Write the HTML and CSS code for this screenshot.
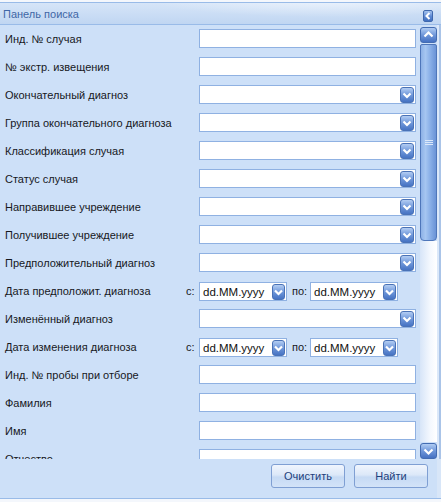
FILE: index.html
```html
<!DOCTYPE html>
<html lang="ru">
<head>
<meta charset="utf-8">
<title>Панель поиска</title>
<link rel="stylesheet" href="styles.css">
</head>
<body>
<div class="panel">
  <div class="header">
    <span class="title">Панель поиска</span>
    <span class="collapse"><svg width="6" height="8" viewBox="0 0 6 8"><polyline points="4.5,1 1.5,4 4.5,7" fill="none" stroke="#fff" stroke-width="2"/></svg></span>
  </div>
  <div class="body">
    <div class="form">
      <div class="row"><span class="lbl">Инд. № случая</span><div class="field"></div></div>
      <div class="row"><span class="lbl">№ экстр. извещения</span><div class="field"></div></div>
      <div class="row"><span class="lbl">Окончательный диагноз</span><div class="field"><span class="trig"><svg width="14" height="16" viewBox="0 0 14 16"><polyline points="3.5,6.5 7,10 10.5,6.5" fill="none" stroke="#fff" stroke-width="2.2"/></svg></span></div></div>
      <div class="row"><span class="lbl">Группа окончательного диагноза</span><div class="field"><span class="trig"><svg width="14" height="16" viewBox="0 0 14 16"><polyline points="3.5,6.5 7,10 10.5,6.5" fill="none" stroke="#fff" stroke-width="2.2"/></svg></span></div></div>
      <div class="row"><span class="lbl">Классификация случая</span><div class="field"><span class="trig"><svg width="14" height="16" viewBox="0 0 14 16"><polyline points="3.5,6.5 7,10 10.5,6.5" fill="none" stroke="#fff" stroke-width="2.2"/></svg></span></div></div>
      <div class="row"><span class="lbl">Статус случая</span><div class="field"><span class="trig"><svg width="14" height="16" viewBox="0 0 14 16"><polyline points="3.5,6.5 7,10 10.5,6.5" fill="none" stroke="#fff" stroke-width="2.2"/></svg></span></div></div>
      <div class="row"><span class="lbl">Направившее учреждение</span><div class="field"><span class="trig"><svg width="14" height="16" viewBox="0 0 14 16"><polyline points="3.5,6.5 7,10 10.5,6.5" fill="none" stroke="#fff" stroke-width="2.2"/></svg></span></div></div>
      <div class="row"><span class="lbl">Получившее учреждение</span><div class="field"><span class="trig"><svg width="14" height="16" viewBox="0 0 14 16"><polyline points="3.5,6.5 7,10 10.5,6.5" fill="none" stroke="#fff" stroke-width="2.2"/></svg></span></div></div>
      <div class="row"><span class="lbl">Предположительный диагноз</span><div class="field"><span class="trig"><svg width="14" height="16" viewBox="0 0 14 16"><polyline points="3.5,6.5 7,10 10.5,6.5" fill="none" stroke="#fff" stroke-width="2.2"/></svg></span></div></div>
      <div class="row row-date"><span class="lbl lbl-date">Дата предположит. диагноза</span><span class="sep">с:</span><div class="field date"><span class="val">dd.MM.yyyy</span><span class="trig"><svg width="13" height="16" viewBox="0 0 13 16"><polyline points="3,6.5 6.5,10 10,6.5" fill="none" stroke="#fff" stroke-width="2.2"/></svg></span></div><span class="sep po">по:</span><div class="field date date2"><span class="val">dd.MM.yyyy</span><span class="trig"><svg width="13" height="16" viewBox="0 0 13 16"><polyline points="3,6.5 6.5,10 10,6.5" fill="none" stroke="#fff" stroke-width="2.2"/></svg></span></div></div>
      <div class="row"><span class="lbl">Изменённый диагноз</span><div class="field"><span class="trig"><svg width="14" height="16" viewBox="0 0 14 16"><polyline points="3.5,6.5 7,10 10.5,6.5" fill="none" stroke="#fff" stroke-width="2.2"/></svg></span></div></div>
      <div class="row row-date"><span class="lbl lbl-date">Дата изменения диагноза</span><span class="sep">с:</span><div class="field date"><span class="val">dd.MM.yyyy</span><span class="trig"><svg width="13" height="16" viewBox="0 0 13 16"><polyline points="3,6.5 6.5,10 10,6.5" fill="none" stroke="#fff" stroke-width="2.2"/></svg></span></div><span class="sep po">по:</span><div class="field date date2"><span class="val">dd.MM.yyyy</span><span class="trig"><svg width="13" height="16" viewBox="0 0 13 16"><polyline points="3,6.5 6.5,10 10,6.5" fill="none" stroke="#fff" stroke-width="2.2"/></svg></span></div></div>
      <div class="row"><span class="lbl">Инд. № пробы при отборе</span><div class="field"></div></div>
      <div class="row"><span class="lbl">Фамилия</span><div class="field"></div></div>
      <div class="row"><span class="lbl">Имя</span><div class="field"></div></div>
      <div class="row"><span class="lbl">Отчество</span><div class="field"></div></div>
    </div>
    <div class="scrollbar">
      <div class="sb-btn sb-up"><svg width="17" height="16" viewBox="0 0 17 16"><polyline points="4.5,9.5 8.5,5.5 12.5,9.5" fill="none" stroke="#fff" stroke-width="2.2"/></svg></div>
      <div class="sb-thumb"><svg width="8" height="6" viewBox="0 0 8 6"><path d="M0 0.5H8M0 2.5H8M0 4.5H8" stroke="#dbe8fa" stroke-width="1"/></svg></div>
      <div class="sb-track"></div>
      <div class="sb-btn sb-down"><svg width="17" height="16" viewBox="0 0 17 16"><polyline points="4.5,6.5 8.5,10.5 12.5,6.5" fill="none" stroke="#fff" stroke-width="2.2"/></svg></div>
    </div>
    <div class="edge"></div>
  </div>
  <div class="footer">
    <button class="btn">Очистить</button>
    <button class="btn">Найти</button>
  </div>
</div>
</body>
</html>
```

FILE: styles.css
```css
html, body {
  margin: 0;
  padding: 0;
}
body {
  background: #f4f7fc;
  font-family: "Liberation Sans", Arial, sans-serif;
  font-size: 11px;
  padding-top: 2px;
}
.panel {
  width: 441px;
  border-top: 1px solid #99bbe8;
  border-bottom: 1px solid #99bbe8;
  background: #cde0f8;
  box-sizing: border-box;
}
.header {
  height: 21px;
  border-bottom: 1px solid #99bbe8;
  background:
    radial-gradient(ellipse 260px 26px at 330px -4px, rgba(255,255,255,0.55), rgba(255,255,255,0) 70%),
    linear-gradient(#d6e5f8, #c0d6f2);
  display: flex;
  align-items: center;
  justify-content: space-between;
  padding: 0 8px 0 3px;
}
.title {
  color: #3f67a6;
  font-size: 11px;
}
.collapse {
  width: 10px;
  height: 12px;
  box-sizing: border-box;
  border: 1px solid #3f68ad;
  border-radius: 2px;
  background: linear-gradient(#a6c4ef, #5d88d2 55%, #4170c0);
  display: flex;
  align-items: center;
  justify-content: center;
  margin-top: 4px;
}
.body {
  display: flex;
  height: 434px;
}
.form {
  width: 420px;
  height: 434px;
  overflow: hidden;
  padding-top: 4px;
  box-sizing: border-box;
}
.row {
  display: flex;
  align-items: center;
  height: 19px;
  margin-bottom: 9px;
  padding-left: 5px;
}
.lbl {
  width: 194px;
  flex: 0 0 194px;
  color: #17181d;
  white-space: nowrap;
}
.lbl-date {
  width: 181px;
  flex-basis: 181px;
}
.sep {
  color: #17181d;
  width: 13px;
  flex: 0 0 13px;
}
.sep.po {
  width: 18px;
  flex-basis: 18px;
  margin-left: 5px;
}
.field {
  position: relative;
  width: 217px;
  height: 19px;
  box-sizing: border-box;
  border: 1px solid #8fb1e2;
  background: #fff;
  display: flex;
  align-items: center;
}
.field.date {
  width: 88px;
}
.field.date2 {
  width: 88px;
}
.row-date .field {
  margin-top: 2px;
}
.val {
  padding-left: 3px;
  color: #111;
  font-size: 11.5px;
}
.trig {
  position: absolute;
  right: 1px;
  top: 1px;
  width: 14px;
  height: 16px;
  box-sizing: border-box;
  border: 1px solid #4a72b6;
  border-radius: 3px;
  background: linear-gradient(#b3cdf3, #6f97da 50%, #4673c3);
  display: flex;
  align-items: center;
  justify-content: center;
  overflow: hidden;
}
.date .trig {
  width: 13px;
}
.trig svg {
  flex: none;
}
.scrollbar {
  width: 17px;
  display: flex;
  flex-direction: column;
  padding-top: 2px;
}
.sb-btn {
  height: 16px;
  flex: none;
  box-sizing: border-box;
  border: 1px solid #436cb2;
  border-radius: 3px;
  background: linear-gradient(#b0ccf3, #6f97da 50%, #4571c2);
  display: flex;
  align-items: center;
  justify-content: center;
}
.sb-btn svg {
  flex: none;
}
.sb-thumb {
  height: 197px;
  flex: none;
  margin-top: 1px;
  box-sizing: border-box;
  border: 1px solid #4e76ba;
  border-radius: 2px 2px 4px 4px;
  background: linear-gradient(to right, #8db1e6, #a6c6f1 30%, #8ab0e8 60%, #6a93d6);
  display: flex;
  align-items: center;
  justify-content: center;
}
.sb-track {
  flex: 1;
  background: linear-gradient(to right, #d7e5f8, #f4f8fe 60%, #ffffff);
}
.sb-down {
  margin-top: 1px;
}
.edge {
  width: 4px;
  background: #dbe8f9;
  box-sizing: border-box;
  border-right: 2px solid #aac4e8;
}
.footer {
  height: 39px;
  box-sizing: border-box;
  display: flex;
  justify-content: flex-end;
  align-items: flex-start;
  gap: 9px;
  padding: 5px 9px 0 0;
  border-right: 4px solid #d8e6f8;
}
.btn {
  width: 74px;
  height: 24px;
  box-sizing: border-box;
  border: 1px solid #7f9fd3;
  border-radius: 3px;
  background: linear-gradient(#f0f5fd, #dce8f8 45%, #c6daf4 55%, #d3e3f8);
  color: #1e3f7c;
  font-family: "Liberation Sans", Arial, sans-serif;
  font-size: 11px;
  padding: 0;
}
```
